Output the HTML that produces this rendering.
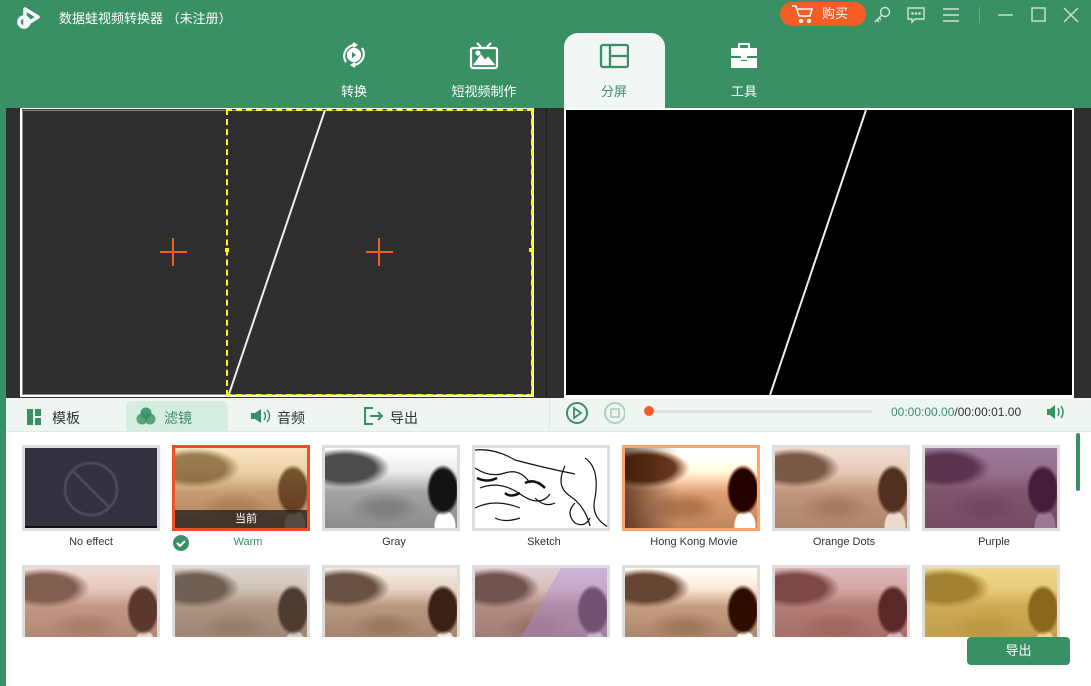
<!DOCTYPE html>
<html><head><meta charset="utf-8"><style>
*{margin:0;padding:0;box-sizing:border-box}
body{width:1091px;height:686px;overflow:hidden;background:#fff;font-family:"Liberation Sans","Noto Sans CJK SC",sans-serif;position:relative}
.abs{position:absolute}
.hdr{left:0;top:0;width:1091px;height:108px;background:#3a9065}
.t{color:#fff;font-size:13px}
.tab{position:absolute;top:40px;width:100px;text-align:center;color:#fff;font-size:13px}
.tab .lb{position:absolute;top:41px;left:0;width:100%}
.photo{position:absolute;width:138px;height:86px;border:3px solid #ddd;overflow:hidden;background:#ddd}
.ph{position:absolute;inset:0;
background:
radial-gradient(ellipse 22px 34px at 118px 42px,#3a2015 60%,transparent 75%),
radial-gradient(ellipse 14px 20px at 120px 78px,#f1e8e0 70%,transparent 80%),
radial-gradient(ellipse 50px 22px at 20px 20px,#6a5040 60%,transparent 90%),
radial-gradient(ellipse 40px 18px at 60px 60px,#9a7a62 30%,transparent 90%),
linear-gradient(#f3ece6 0%,#e8d6c6 30%,#b99880 55%,#a58570 100%)}
.ov{position:absolute;inset:0}
.cap{position:absolute;width:150px;text-align:center;font-size:11px;color:#333;top:536px}
</style></head><body>
<div class="abs hdr"></div>
<!-- logo -->
<svg class="abs" style="left:16px;top:5px" width="28" height="28" viewBox="0 0 28 28" fill="none" stroke="#fff" stroke-width="3.5" stroke-linejoin="round"><path d="M9 4 L22 12 L9 20 Z"/><circle cx="8" cy="17" r="5"/></svg>
<div class="abs t" style="left:59px;top:8px">数据蛙视频转换器 （未注册）</div>
<div class="abs" style="left:780px;top:2px;width:86px;height:24px;border-radius:12px;background:#f55d26;color:#fff;font-size:13px;line-height:24px;padding-left:42px">购买</div>
<svg class="abs" style="left:790px;top:4px" width="26" height="20" viewBox="0 0 26 20" fill="none" stroke="#fff" stroke-width="1.5"><path d="M2 2h4l3 10h11l2-7H8"/><circle cx="11" cy="17" r="1.3"/><circle cx="19" cy="17" r="1.3"/></svg>
<svg class="abs" style="left:872px;top:5px" width="20" height="20" viewBox="0 0 20 20" fill="none" stroke="#cfe3d8" stroke-width="1.4"><circle cx="13" cy="7" r="4.5"/><path d="M10 10L3 17M5 15l2 2M7 13l2 2"/></svg>
<svg class="abs" style="left:906px;top:6px" width="20" height="19" viewBox="0 0 20 19" fill="none" stroke="#cfe3d8" stroke-width="1.4"><path d="M2 2h16v11H9l-3 3v-3H2z"/><circle cx="6.5" cy="7.5" r=".6"/><circle cx="10" cy="7.5" r=".6"/><circle cx="13.5" cy="7.5" r=".6"/></svg>
<svg class="abs" style="left:942px;top:7px" width="18" height="16" viewBox="0 0 18 16" stroke="#cfe3d8" stroke-width="1.4"><path d="M1 2h16M1 8h16M1 14h16"/></svg>
<div class="abs" style="left:979px;top:7px;width:1px;height:16px;background:#6aa888"></div>
<svg class="abs" style="left:996px;top:6px" width="86" height="18" viewBox="0 0 86 18" fill="none" stroke="#cfe3d8" stroke-width="1.4"><path d="M2 9h15"/><rect x="36" y="2" width="13" height="13"/><path d="M68 2l14 14M82 2L68 16"/></svg>
<!-- tabs -->
<div class="abs" style="left:564px;top:33px;width:101px;height:75px;background:#f1f7f4;border-radius:14px 14px 0 0"></div>
<div class="tab" style="left:304px"><svg width="30" height="30" viewBox="0 0 30 30" fill="none" stroke="#fff" stroke-width="2.2" style="margin-top:0"><path d="M7 22a11 11 0 0 1 9-17M23 8a11 11 0 0 1-9 17"/><path d="M14 3l3 2-3 2M16 27l-3-2 3-2"/><circle cx="15" cy="15" r="6" fill="#fff"/><path d="M13 12l4 3-4 3z" fill="#3a9065" stroke="none"/></svg><div class="lb">转换</div></div>
<div class="tab" style="left:434px"><svg width="30" height="30" viewBox="0 0 30 30" fill="none" stroke="#fff" stroke-width="2.2"><path d="M8 3l4 4M22 3l-4 4"/><rect x="2" y="8" width="26" height="20" rx="2"/><path d="M6 24l6-8 4 5 3-3 5 6z" fill="#fff"/><circle cx="9" cy="13" r="1.5" fill="#fff"/></svg><div class="lb">短视频制作</div></div>
<div class="tab" style="left:564px;color:#3a9065"><svg width="30" height="30" viewBox="0 0 30 30" fill="none" stroke="#3a9065" stroke-width="2.3"><rect x="2" y="5" width="27" height="22" rx="2"/><path d="M11 5v22M11 16h18"/></svg><div class="lb">分屏</div></div>
<div class="tab" style="left:694px"><svg width="30" height="30" viewBox="0 0 30 30" fill="#fff"><rect x="10" y="4" width="10" height="5" fill="none" stroke="#fff" stroke-width="2"/><rect x="2" y="8" width="26" height="8"/><path d="M2 18h10v3h6v-3h10v10H2z"/><rect x="12" y="15" width="6" height="5"/></svg><div class="lb">工具</div></div>
<!-- preview -->
<div class="abs" style="left:0;top:108px;width:6px;height:578px;background:#3a9065"></div>
<div class="abs" style="left:6px;top:108px;width:558px;height:290px;background:#2f2f2f"></div>
<div class="abs" style="left:546px;top:108px;width:1px;height:290px;background:#1e1e1e"></div>
<div class="abs" style="left:20px;top:108px;width:514px;height:289px;border:2px solid #fff;border-top:1px solid #fff"></div>
<div class="abs" style="left:22px;top:110px;width:510px;height:285px;border:1px solid #888"></div>
<div class="abs" style="left:226px;top:109px;width:307px;height:287px;border:2px dashed #ffff00"></div>
<svg class="abs" style="left:0;top:108px" width="560" height="290"><line x1="325" y1="2" x2="229" y2="286" stroke="#eee" stroke-width="2"/><path d="M173 130v28M160 144h27M379 130v28M366 144h27" stroke="#f55d26" stroke-width="2"/><rect x="225" y="140" width="4" height="4" fill="#ff0"/><rect x="529" y="140" width="4" height="4" fill="#ff0"/></svg>
<div class="abs" style="left:564px;top:108px;width:510px;height:289px;background:#000;border:2px solid #fff"></div>
<div class="abs" style="left:1074px;top:108px;width:17px;height:290px;background:#2f2f2f"></div>
<svg class="abs" style="left:564px;top:108px" width="510" height="290"><line x1="302" y1="2" x2="206" y2="287" stroke="#eee" stroke-width="2"/></svg>
<!-- toolbar -->
<div class="abs" style="left:6px;top:398px;width:1085px;height:34px;background:#eff6f2;border-bottom:1px solid #dde9e3"></div>
<div class="abs" style="left:549px;top:398px;width:1px;height:34px;background:#dde9e3"></div>
<div class="abs" style="left:126px;top:401px;width:102px;height:31px;background:#d6ede1;border-radius:6px 6px 0 0"></div>
<svg class="abs" style="left:27px;top:409px" width="14" height="16"><rect x="0" y="0" width="6" height="16" fill="#3a9065"/><rect x="8" y="0" width="6" height="7" fill="#3a9065"/><rect x="8" y="9" width="6" height="7" fill="#3a9065"/></svg>
<div class="abs" style="left:52px;top:408px;font-size:14px;color:#333">模板</div>
<svg class="abs" style="left:136px;top:407px" width="20" height="18" fill="#3a9065"><circle cx="10" cy="6" r="5.5" opacity=".9"/><circle cx="6" cy="12" r="5.5" opacity=".8"/><circle cx="14" cy="12" r="5.5" opacity=".8"/></svg>
<div class="abs" style="left:164px;top:408px;font-size:14px;color:#3a9065">滤镜</div>
<svg class="abs" style="left:250px;top:408px" width="22" height="16" fill="#3a9065"><path d="M1 5h4l6-4v14l-6-4H1z"/><path d="M14 4q3 4 0 8M17 2q5 6 0 12" fill="none" stroke="#3a9065" stroke-width="1.5"/></svg>
<div class="abs" style="left:277px;top:408px;font-size:14px;color:#333">音频</div>
<svg class="abs" style="left:364px;top:407px" width="20" height="18" fill="none" stroke="#3a9065" stroke-width="2"><path d="M9 1H1v16h8M6 9h12M14 5l4 4-4 4"/></svg>
<div class="abs" style="left:390px;top:408px;font-size:14px;color:#333">导出</div>
<svg class="abs" style="left:565px;top:401px" width="60" height="24" fill="none"><circle cx="12" cy="12" r="10" stroke="#3a9065" stroke-width="2"/><path d="M9 7l7 5-7 5z" stroke="#3a9065" stroke-width="1.8"/><circle cx="50" cy="12" r="10" stroke="#a9d3bd" stroke-width="2"/><rect x="46" y="8" width="8" height="8" stroke="#a9d3bd" stroke-width="1.6"/></svg>
<div class="abs" style="left:650px;top:410px;width:222px;height:3px;background:#e0e0e0"></div>
<div class="abs" style="left:644px;top:406px;width:10px;height:10px;border-radius:50%;background:#f55d26"></div>
<div class="abs" style="left:891px;top:405px;font-size:12px;color:#3a9065">00:00:00.00<span style="color:#333">/00:00:01.00</span></div>
<svg class="abs" style="left:1046px;top:404px" width="20" height="16" fill="#3a9065"><path d="M1 5h3l5-4v14l-5-4H1z"/><path d="M12 4q2 4 0 8M15 2q4 6 0 12" fill="none" stroke="#3a9065" stroke-width="1.5"/></svg>
<div class="abs" style="left:1076px;top:433px;width:4px;height:58px;background:#3a9065;border-radius:2px"></div>
<!-- thumbs row1 -->
<div class="photo" style="left:22px;top:445px;background:#33323f;border-color:#ddd"><svg width="132" height="80"><circle cx="66" cy="41" r="26" fill="none" stroke="#4a4957" stroke-width="3"/><path d="M48 23l36 36" stroke="#4a4957" stroke-width="3"/><rect y="78" width="132" height="2" fill="#111"/></svg></div>
<div class="photo" style="left:172px;top:445px;border-color:#f04e23"><div class="ph"></div><div class="ov" style="background:linear-gradient(rgba(255,220,120,.35),rgba(200,110,40,.25))"></div><div class="ov" style="top:62px;background:rgba(20,20,20,.7);color:#fff;font-size:11px;text-align:right;padding-right:50px;line-height:18px">当前</div></div>
<div class="photo" style="left:322px;top:445px"><div class="ph" style="filter:grayscale(1) contrast(1.2)"></div></div>
<div class="photo" style="left:472px;top:445px;background:#fff"><svg width="132" height="80" fill="none" stroke="#111" stroke-width="1.2"><path d="M0 2q20 -2 40 10q30 8 60 14M0 20q15 10 30 5t25 10M5 40q20 -8 40 6t30 0M0 60q20 -10 45 0M90 18q-10 20 5 30q15 10 20 30M110 10q15 10 10 40q-5 20 15 30M60 50q10 10 20 5M20 70q10 5 25 0M100 55q-10 10 0 20q10 5 15 -5"/><path d="M2 30q10 5 20 0M30 45q5 5 15 0M50 35q10 -5 20 5" stroke-width="2.5"/></svg></div>
<div class="photo" style="left:622px;top:445px;border-color:#fca46c"><div class="ph" style="filter:contrast(1.4) saturate(1.3)"></div><div class="ov" style="background:linear-gradient(90deg,rgba(40,10,0,.6),transparent 40%)"></div></div>
<div class="photo" style="left:772px;top:445px"><div class="ph"></div><div class="ov" style="background:rgba(220,140,100,.15)"></div></div>
<div class="photo" style="left:922px;top:445px"><div class="ph"></div><div class="ov" style="background:rgba(80,30,90,.55)"></div></div>
<div class="cap" style="left:16px">No effect</div>
<svg class="abs" style="left:173px;top:535px" width="16" height="16"><circle cx="8" cy="8" r="8" fill="#3a9065"/><path d="M4 8l3 3 5-5" stroke="#fff" stroke-width="2" fill="none"/></svg>
<div class="cap" style="left:173px;color:#3a9065">Warm</div>
<div class="cap" style="left:319px">Gray</div>
<div class="cap" style="left:469px">Sketch</div>
<div class="cap" style="left:619px">Hong Kong Movie</div>
<div class="cap" style="left:769px">Orange Dots</div>
<div class="cap" style="left:919px">Purple</div>
<!-- row2 -->
<div class="photo" style="left:22px;top:565px;height:72px;border-bottom:0"><div class="ph"></div><div class="ov" style="background:rgba(230,150,150,.2)"></div></div>
<div class="photo" style="left:172px;top:565px;height:72px;border-bottom:0"><div class="ph"></div><div class="ov" style="background:rgba(140,140,140,.25)"></div></div>
<div class="photo" style="left:322px;top:565px;height:72px;border-bottom:0"><div class="ph"></div></div>
<div class="photo" style="left:472px;top:565px;height:72px;border-bottom:0"><div class="ph"></div><div class="ov" style="background:linear-gradient(120deg,transparent 50%,rgba(170,140,220,.4) 50%),rgba(150,90,140,.2)"></div></div>
<div class="photo" style="left:622px;top:565px;height:72px;border-bottom:0"><div class="ph" style="filter:contrast(1.2)"></div></div>
<div class="photo" style="left:772px;top:565px;height:72px;border-bottom:0"><div class="ph"></div><div class="ov" style="background:rgba(170,60,90,.3)"></div></div>
<div class="photo" style="left:922px;top:565px;height:72px;border-bottom:0"><div class="ph"></div><div class="ov" style="background:rgba(230,190,30,.45)"></div></div>
<div class="abs" style="left:967px;top:637px;width:103px;height:28px;border-radius:4px;background:#3a9065;color:#fff;font-size:13px;text-align:center;line-height:28px">导出</div>
</body></html>
